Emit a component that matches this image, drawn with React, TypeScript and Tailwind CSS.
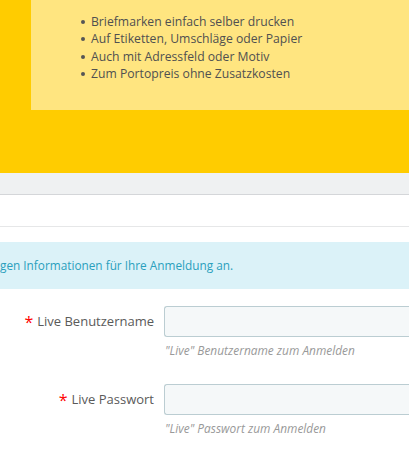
const bullets = [
  'Briefmarken einfach selber drucken',
  'Auf Etiketten, Umschläge oder Papier',
  'Auch mit Adressfeld oder Motiv',
  'Zum Portopreis ohne Zusatzkosten',
];

const fields = [
  { label: 'Live Benutzername', help: '"Live" Benutzername zum Anmelden', type: 'text' },
  { label: 'Live Passwort', help: '"Live" Passwort zum Anmelden', type: 'password' },
];

function App() {
  return (
    <main className="h-[462px] w-[409px] overflow-hidden bg-white font-['Open_Sans',sans-serif]">
      <section className="h-[173px] bg-[#ffcc00] pl-[31px]">
        <div className="h-[110px] bg-[#ffe580] pl-[50px] pt-[13px]">
          <ul className="grid text-[12.2px] leading-[17.4px] text-[#505050]">
            {bullets.map((b) => (
              <li key={b} className="flex items-center gap-[6px]">
                <span className="h-[4px] w-[4px] rounded-full bg-[#555]" />
                <span>{b}</span>
              </li>
            ))}
          </ul>
        </div>
      </section>

      <div className="h-[22px] border-b border-[#d4d6d9] bg-[#eff1f2]" />
      <div className="h-[32px] border-b border-[#e6e7e8]" />

      <div className="mt-[15px] flex h-[47px] items-center bg-[#dbf2f8] text-[11.8px] text-[#2aa0bd]">
        gen Informationen für Ihre Anmeldung an.
      </div>

      <form className="mt-[17px] grid gap-[26px]">
        {fields.map((f) => (
          <div key={f.label} className="grid grid-cols-[164px_1fr]">
            <label className="flex h-[31px] items-center justify-end gap-[4px] pr-[10px] text-[13px] text-[#5a5a5a]">
              <span className="text-[16px] leading-none text-[#ff0000]">*</span>
              {f.label}
            </label>
            <div>
              <input
                type={f.type}
                className="block h-[31px] w-[260px] rounded-l-[3px] border border-r-0 border-[#bbcdd2] bg-[#f5f8f9]"
              />
              <p className="mt-[6px] pl-[1px] text-[11.9px] italic leading-[15px] text-[#999]">{f.help}</p>
            </div>
          </div>
        ))}
      </form>
    </main>
  );
}

export default App;
